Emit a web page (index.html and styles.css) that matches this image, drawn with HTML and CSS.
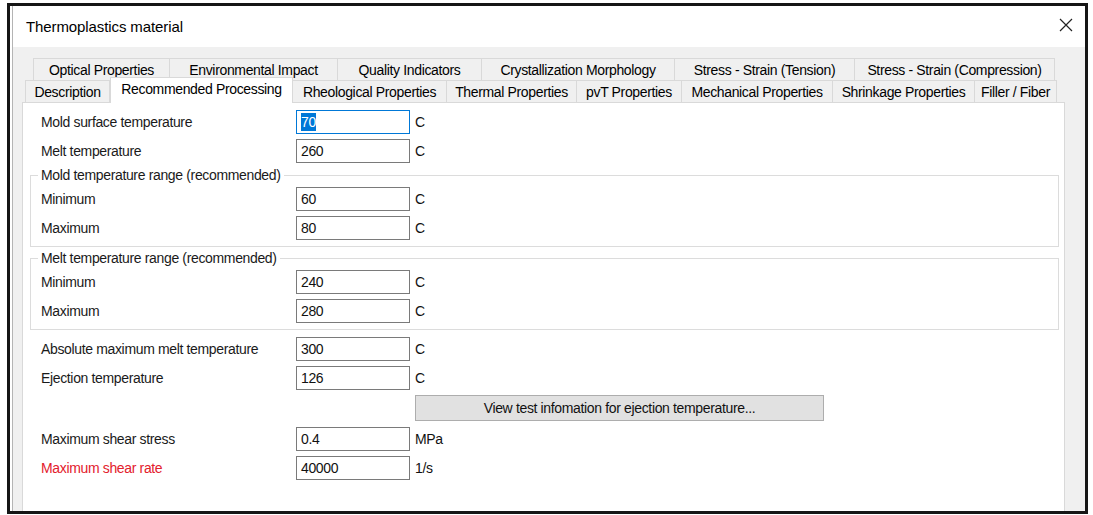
FILE: index.html
```html
<!DOCTYPE html>
<html lang="en">
<head>
<meta charset="utf-8">
<title>Thermoplastics material</title>
<link rel="stylesheet" href="styles.css">
</head>
<body>
<div class="window">
  <div class="frame">
    <header class="titlebar">
      <span class="title">Thermoplastics material</span>
      <span class="close" aria-label="Close">
        <svg width="14" height="14" viewBox="0 0 14 14"><path d="M1 1 L13 13 M13 1 L1 13" stroke="#222" stroke-width="1.2" fill="none"/></svg>
      </span>
    </header>
    <div class="body">
      <div class="tabs">
        <div class="tab-row back">
          <div class="tab t-optical">Optical Properties</div>
          <div class="tab t-env">Environmental Impact</div>
          <div class="tab t-quality">Quality Indicators</div>
          <div class="tab t-cryst">Crystallization Morphology</div>
          <div class="tab t-tension">Stress - Strain (Tension)</div>
          <div class="tab t-compr">Stress - Strain (Compression)</div>
        </div>
        <div class="tab-row front">
          <div class="tab t-desc">Description</div>
          <div class="tab t-rec active">Recommended Processing</div>
          <div class="tab t-rheo">Rheological Properties</div>
          <div class="tab t-therm">Thermal Properties</div>
          <div class="tab t-pvt">pvT Properties</div>
          <div class="tab t-mech">Mechanical Properties</div>
          <div class="tab t-shrink">Shrinkage Properties</div>
          <div class="tab t-filler">Filler / Fiber</div>
        </div>
      </div>
      <div class="panel">
        <div class="field outer">
          <span class="label">Mold surface temperature</span>
          <span class="textbox focused"><span class="selected">70</span></span>
          <span class="unit">C</span>
        </div>
        <div class="field outer">
          <span class="label">Melt temperature</span>
          <span class="textbox">260</span>
          <span class="unit">C</span>
        </div>
        <fieldset class="group">
          <legend>Mold temperature range (recommended)</legend>
          <div class="field">
            <span class="label">Minimum</span>
            <span class="textbox">60</span>
            <span class="unit">C</span>
          </div>
          <div class="field">
            <span class="label">Maximum</span>
            <span class="textbox">80</span>
            <span class="unit">C</span>
          </div>
        </fieldset>
        <fieldset class="group second">
          <legend>Melt temperature range (recommended)</legend>
          <div class="field">
            <span class="label">Minimum</span>
            <span class="textbox">240</span>
            <span class="unit">C</span>
          </div>
          <div class="field">
            <span class="label">Maximum</span>
            <span class="textbox">280</span>
            <span class="unit">C</span>
          </div>
        </fieldset>
        <div class="field outer after-group">
          <span class="label">Absolute maximum melt temperature</span>
          <span class="textbox">300</span>
          <span class="unit">C</span>
        </div>
        <div class="field outer">
          <span class="label">Ejection temperature</span>
          <span class="textbox">126</span>
          <span class="unit">C</span>
        </div>
        <div class="button-row">
          <button class="button" type="button">View test infomation for ejection temperature...</button>
        </div>
        <div class="field outer after-button">
          <span class="label">Maximum shear stress</span>
          <span class="textbox">0.4</span>
          <span class="unit">MPa</span>
        </div>
        <div class="field outer">
          <span class="label warn">Maximum shear rate</span>
          <span class="textbox">40000</span>
          <span class="unit">1/s</span>
        </div>
      </div>
    </div>
  </div>
</div>
</body>
</html>
```

FILE: styles.css
```css
* {
  box-sizing: border-box;
}

html, body {
  margin: 0;
  padding: 0;
  background: #ffffff;
}

body {
  font-family: "Liberation Sans", Arial, sans-serif;
  font-size: 14px;
  letter-spacing: -0.35px;
  color: #111;
}

/* dialog outline */
.window {
  margin: 3px 0 0 7px;
  width: 1081px;
  height: 511px;
  border: 3px solid #161616;
  background: #ffffff;
}

.frame {
  margin-left: 2px;
  height: 100%;
  border-left: 1px solid #b4b4b4;
  display: flex;
  flex-direction: column;
}

/* title bar */
.titlebar {
  height: 41px;
  flex-shrink: 0;
  display: flex;
  align-items: center;
  justify-content: space-between;
  padding: 0 12px 0 13px;
  background: #ffffff;
}

.title {
  font-size: 15px;
  letter-spacing: -0.1px;
  color: #000;
}

.close {
  display: flex;
  margin-bottom: 3px;
}

/* client area */
.body {
  flex: 1;
  display: flex;
  flex-direction: column;
  background: #f0f0f0;
  padding: 11px 20px 0 9px;
}

/* tab strip, two rows */
.tabs {
  flex-shrink: 0;
}

.tab-row {
  display: flex;
  height: 22px;
}

.tab-row.back {
  padding-left: 11px;
}

.tab-row.front {
  padding-left: 3px;
}

.tab {
  height: 22px;
  display: flex;
  align-items: center;
  justify-content: center;
  white-space: nowrap;
  color: #000;
  background: #f0f0f0;
  border-top: 1px solid #d9d9d9;
  border-right: 1px solid #d9d9d9;
}

.tab-row .tab:first-child {
  border-left: 1px solid #d9d9d9;
}

.tab.active {
  position: relative;
  z-index: 1;
  height: 26px;
  margin-top: -3px;
  margin-bottom: -1px;
  align-items: flex-start;
  padding-top: 3px;
  background: #ffffff;
  border-left: 1px solid #d9d9d9;
}

.t-optical { width: 137px; }
.t-env { width: 168px; }
.t-quality { width: 144px; }
.t-cryst { width: 193px; }
.t-tension { width: 180px; }
.t-compr { width: 200px; }

.t-desc { width: 85px; }
.t-rec { width: 183px; }
.t-rheo { width: 154px; }
.t-therm { width: 130px; }
.t-pvt { width: 105px; }
.t-mech { width: 151px; }
.t-shrink { width: 142px; }
.t-filler { width: 82px; }

/* tab page */
.panel {
  flex: 1;
  background: #ffffff;
  border: 1px solid #d9d9d9;
  border-bottom: none;
  padding: 7px 5px 0 7px;
  display: flex;
  flex-direction: column;
}

.field {
  display: flex;
  align-items: center;
  height: 24px;
}

.field + .field {
  margin-top: 5px;
}

.field.outer {
  padding-left: 11px;
}

.label {
  width: 255px;
  flex-shrink: 0;
  color: #1a1a1a;
}

.label.warn {
  color: #e3202c;
}

.textbox {
  width: 114px;
  height: 24px;
  flex-shrink: 0;
  border: 1px solid #7a7a7a;
  padding-left: 4px;
  line-height: 22px;
  color: #111;
  background: #ffffff;
}

.textbox.focused {
  border-color: #0078d7;
}

.selected {
  display: inline-block;
  background: #0078d7;
  color: #ffffff;
  line-height: 18px;
}

.unit {
  margin-left: 5px;
  color: #111;
}

/* grouped ranges */
.group {
  margin: 4px 0 0 0;
  padding: 4px 0 6px 10px;
  border: 1px solid #dcdcdc;
  min-inline-size: 0;
}

.group.second {
  margin-top: 3px;
}

.group legend {
  padding: 0 3px;
  margin-left: -3px;
  line-height: 16px;
  color: #1a1a1a;
}

.field.after-group {
  margin-top: 7px;
}

.button-row {
  margin-top: 5px;
  padding-left: 385px;
}

.button {
  width: 409px;
  height: 26px;
  background: #e1e1e1;
  border: 1px solid #adadad;
  font-family: "Liberation Sans", Arial, sans-serif;
  font-size: 14px;
  letter-spacing: -0.35px;
  color: #111;
  padding: 0;
}

.field.after-button {
  margin-top: 6px;
}
```
